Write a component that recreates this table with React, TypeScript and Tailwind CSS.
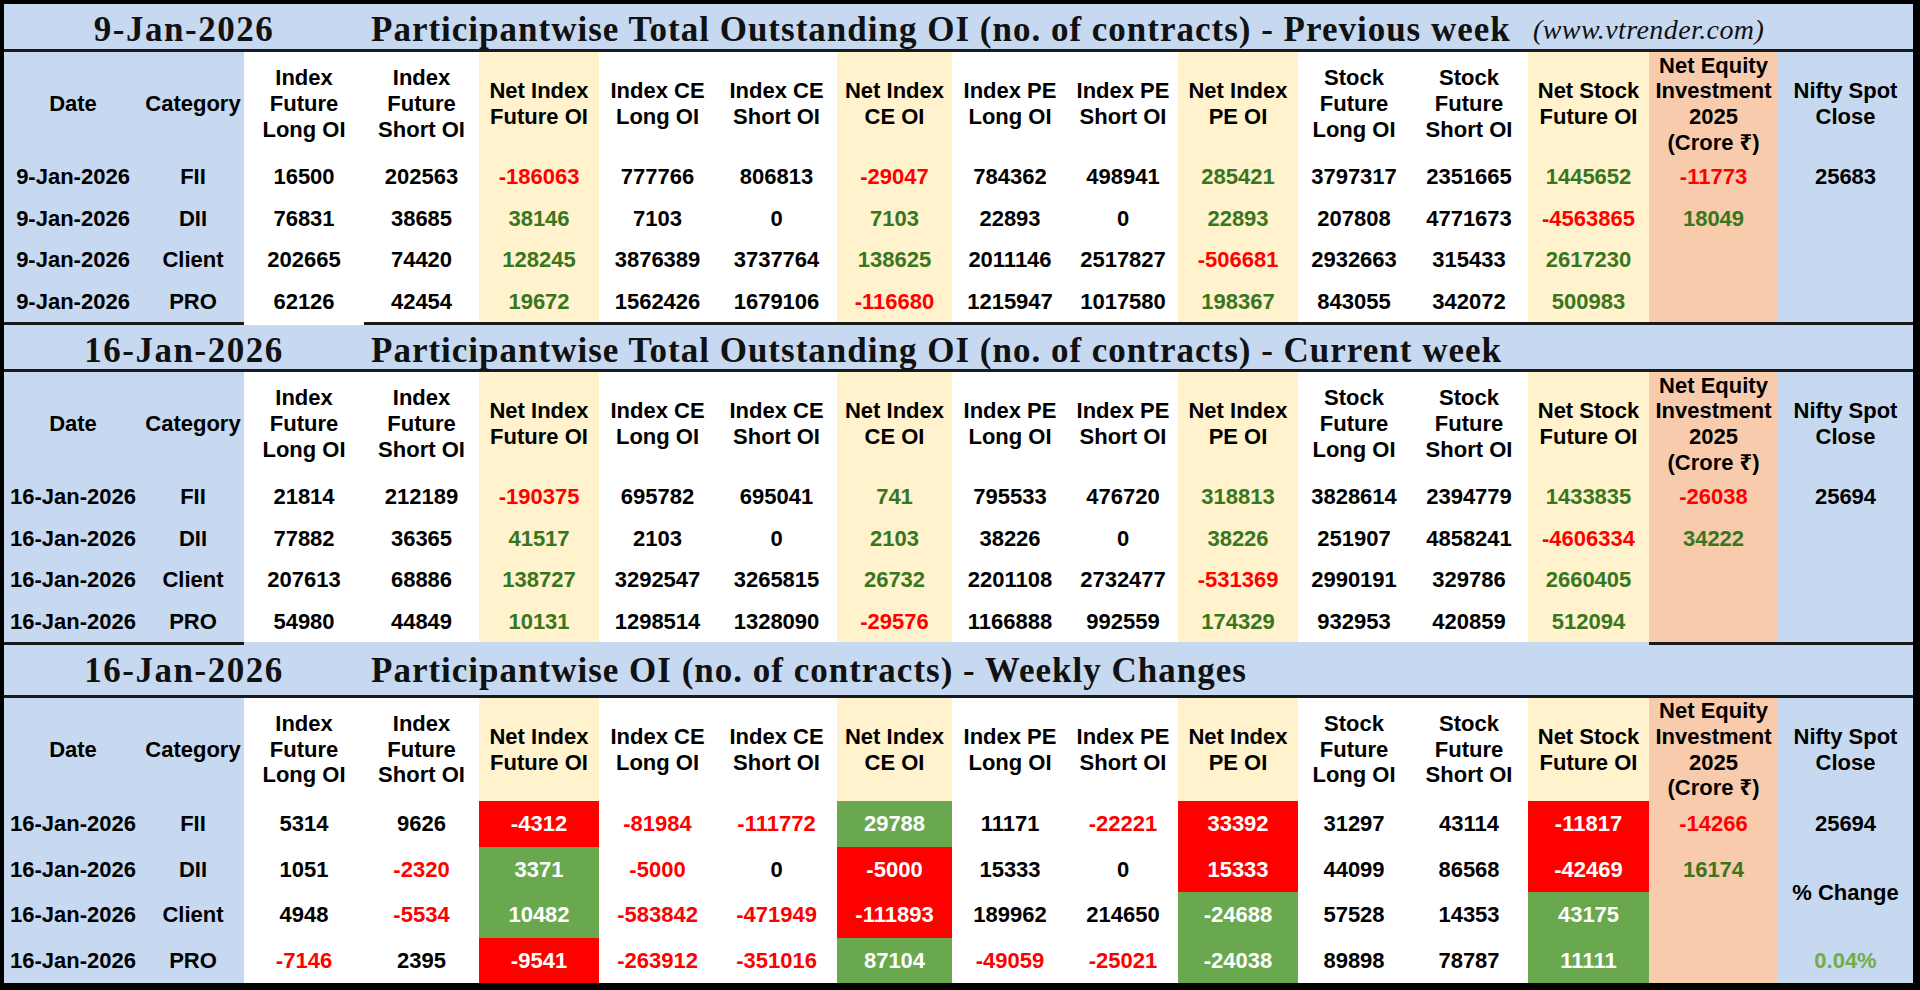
const COLS =
  "grid grid-cols-[138px_102px_120px_115px_120px_117px_121px_115px_116px_110px_120px_112px_118px_121px_129px_135px]";

const BLUE = "bg-[#c6d9f1]";
const YEL = "bg-[#fff2cc]";
const ORG = "bg-[#f8cbad]";
const colBg = [BLUE, BLUE, "bg-white", "bg-white", YEL, "bg-white", "bg-white", YEL, "bg-white", "bg-white", YEL, "bg-white", "bg-white", YEL, ORG, BLUE];

const NET = [4, 7, 10, 13];
const RED = "text-[#ff0000]";
const GREEN = "text-[#38761d]";

const HEADERS = [
  "Date",
  "Category",
  "Index\nFuture\nLong OI",
  "Index\nFuture\nShort OI",
  "Net Index\nFuture OI",
  "Index CE\nLong OI",
  "Index CE\nShort OI",
  "Net Index\nCE OI",
  "Index PE\nLong OI",
  "Index PE\nShort OI",
  "Net Index\nPE OI",
  "Stock\nFuture\nLong OI",
  "Stock\nFuture\nShort OI",
  "Net Stock\nFuture OI",
  "Net Equity\nInvestment\n2025\n(Crore ₹)",
  "Nifty Spot\nClose",
];

const prevWeek = [
  ["9-Jan-2026", "FII", "16500", "202563", "-186063", "777766", "806813", "-29047", "784362", "498941", "285421", "3797317", "2351665", "1445652", "-11773", "25683"],
  ["9-Jan-2026", "DII", "76831", "38685", "38146", "7103", "0", "7103", "22893", "0", "22893", "207808", "4771673", "-4563865", "18049", ""],
  ["9-Jan-2026", "Client", "202665", "74420", "128245", "3876389", "3737764", "138625", "2011146", "2517827", "-506681", "2932663", "315433", "2617230", "", ""],
  ["9-Jan-2026", "PRO", "62126", "42454", "19672", "1562426", "1679106", "-116680", "1215947", "1017580", "198367", "843055", "342072", "500983", "", ""],
];

const curWeek = [
  ["16-Jan-2026", "FII", "21814", "212189", "-190375", "695782", "695041", "741", "795533", "476720", "318813", "3828614", "2394779", "1433835", "-26038", "25694"],
  ["16-Jan-2026", "DII", "77882", "36365", "41517", "2103", "0", "2103", "38226", "0", "38226", "251907", "4858241", "-4606334", "34222", ""],
  ["16-Jan-2026", "Client", "207613", "68886", "138727", "3292547", "3265815", "26732", "2201108", "2732477", "-531369", "2990191", "329786", "2660405", "", ""],
  ["16-Jan-2026", "PRO", "54980", "44849", "10131", "1298514", "1328090", "-29576", "1166888", "992559", "174329", "932953", "420859", "512094", "", ""],
];

// last column handled separately (merged cell)
const changes = [
  { v: ["16-Jan-2026", "FII", "5314", "9626", "-4312", "-81984", "-111772", "29788", "11171", "-22221", "33392", "31297", "43114", "-11817", "-14266"], fill: "RGRR" },
  { v: ["16-Jan-2026", "DII", "1051", "-2320", "3371", "-5000", "0", "-5000", "15333", "0", "15333", "44099", "86568", "-42469", "16174"], fill: "GRRR" },
  { v: ["16-Jan-2026", "Client", "4948", "-5534", "10482", "-583842", "-471949", "-111893", "189962", "214650", "-24688", "57528", "14353", "43175", ""], fill: "GRGG" },
  { v: ["16-Jan-2026", "PRO", "-7146", "2395", "-9541", "-263912", "-351016", "87104", "-49059", "-25021", "-24038", "89898", "78787", "11111", ""], fill: "RGGG" },
];

const signColor = (v: string) => (v.startsWith("-") ? RED : v ? GREEN : "");

function TitleBand({ date, title, site, h }: { date: string; title: string; site?: boolean; h: string }) {
  return (
    <div className={`${COLS} ${BLUE} ${h} items-center font-['Liberation_Serif',serif] font-bold text-[#111]`}>
      <div className="col-span-3 text-center text-[35px] tracking-[1.5px]">{date}</div>
      <div className="col-span-10 pl-[7px] whitespace-nowrap text-[35px] tracking-[1px]">{title}</div>
      <div className="col-span-3 pl-[5px] whitespace-nowrap text-[28px] tracking-[0.4px] font-normal italic">
        {site ? "(www.vtrender.com)" : ""}
      </div>
    </div>
  );
}

function HeaderRow({ h }: { h: string }) {
  return (
    <div className={`${COLS} ${h}`}>
      {HEADERS.map((t, i) => (
        <div
          key={i}
          className={`${colBg[i]} flex items-center justify-center text-center whitespace-pre-line text-[22px] leading-[25.7px] font-bold text-black`}
        >
          {t}
        </div>
      ))}
    </div>
  );
}

function WeekBody({ rows }: { rows: string[][] }) {
  return (
    <div className={`${COLS} auto-rows-[41.5px]`}>
      {rows.flatMap((r, ri) =>
        r.map((v, i) => {
          const color = NET.includes(i) || i === 14 ? signColor(v) : "text-black";
          return (
            <div key={`${ri}-${i}`} className={`${colBg[i]} ${color} flex items-center justify-center text-[22px] font-bold`}>
              {v}
            </div>
          );
        })
      )}
    </div>
  );
}

function ChangeBody() {
  const cells: JSX.Element[] = [];
  changes.forEach((r, ri) => {
    r.v.forEach((v, i) => {
      const netIdx = NET.indexOf(i);
      let cls = `${colBg[i]} text-black`;
      if (netIdx >= 0) {
        cls = r.fill[netIdx] === "R" ? "bg-[#ff0000] text-white" : "bg-[#6aa84f] text-white";
      } else if (i === 14) {
        cls = `${ORG} ${signColor(v)}`;
      } else if (i > 1 && v.startsWith("-")) {
        cls = `${colBg[i]} ${RED}`;
      }
      cells.push(
        <div key={`${ri}-${i}`} className={`${cls} flex items-center justify-center text-[22px] font-bold`}>
          {v}
        </div>
      );
    });
    if (ri === 0)
      cells.push(
        <div key="n0" className={`${BLUE} flex items-center justify-center text-[22px] font-bold text-black`}>
          25694
        </div>
      );
    if (ri === 1)
      cells.push(
        <div key="n1" className={`${BLUE} row-span-2 flex items-center justify-center text-[22px] font-bold text-black`}>
          % Change
        </div>
      );
    if (ri === 3)
      cells.push(
        <div key="n3" className={`${BLUE} flex items-center justify-center text-[22px] font-bold text-[#70ad47]`}>
          0.04%
        </div>
      );
  });
  return <div className={`${COLS} auto-rows-[45.5px]`}>{cells}</div>;
}

const Line = () => <div className="h-[3px] bg-[#1a1a1a]" />;

export default function App() {
  return (
    <div className="w-[1920px] h-[990px] overflow-hidden bg-black pt-[4px] pl-[4px] font-['Liberation_Sans','Noto_Sans',Arial,sans-serif]">
      <div className="w-[1909px]">
        {/* Previous week */}
        <TitleBand
          h="h-[45px]"
          date="9-Jan-2026"
          title="Participantwise Total Outstanding OI (no. of contracts) - Previous week"
          site
        />
        <Line />
        <HeaderRow h="h-[104px]" />
        <WeekBody rows={prevWeek} />
        <div className="flex h-[3px]">
          <div className="w-[240px] bg-[#1a1a1a]" />
          <div className="w-[120px] bg-white" />
          <div className="flex-1 bg-[#1a1a1a]" />
        </div>

        {/* Current week */}
        <TitleBand
          h="h-[44px]"
          date="16-Jan-2026"
          title="Participantwise Total Outstanding OI (no. of contracts) - Current week"
        />
        <Line />
        <HeaderRow h="h-[104px]" />
        <WeekBody rows={curWeek} />
        <div className="flex h-[3px]">
          <div className="w-[240px] bg-[#1a1a1a]" />
          <div className={`w-[1405px] ${BLUE}`} />
          <div className="flex-1 bg-[#1a1a1a]" />
        </div>

        {/* Weekly changes */}
        <TitleBand h="h-[50px]" date="16-Jan-2026" title="Participantwise OI (no. of contracts) - Weekly Changes" />
        <Line />
        <HeaderRow h="h-[103px]" />
        <ChangeBody />
      </div>
    </div>
  );
}
